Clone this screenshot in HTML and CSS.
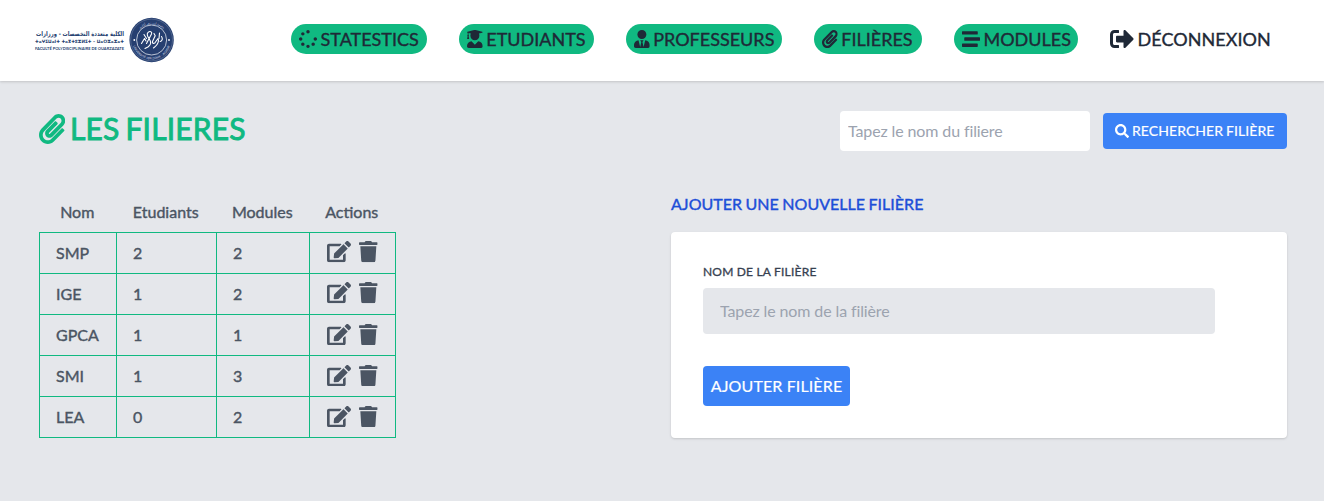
FILE: index.html
```html
<!DOCTYPE html>
<html lang="fr">
<head>
<meta charset="utf-8">
<title>Les filières</title>
<link rel="stylesheet" href="styles.css">
</head>
<body>
<svg class="sprite" aria-hidden="true">
  <symbol id="spinner" viewBox="0 0 512 512"><path d="M304 48c0 26.51-21.49 48-48 48s-48-21.49-48-48 21.49-48 48-48 48 21.49 48 48zm-48 368c-26.51 0-48 21.49-48 48s21.49 48 48 48 48-21.49 48-48-21.49-48-48-48zm208-208c-26.51 0-48 21.49-48 48s21.49 48 48 48 48-21.49 48-48-21.49-48-48-48zM96 256c0-26.51-21.49-48-48-48S0 229.49 0 256s21.49 48 48 48 48-21.49 48-48zm12.922 99.078c-26.51 0-48 21.49-48 48s21.49 48 48 48 48-21.49 48-48c0-26.509-21.491-48-48-48zm294.156 0c-26.51 0-48 21.49-48 48s21.49 48 48 48 48-21.49 48-48c0-26.509-21.49-48-48-48zM108.922 60.922c-26.51 0-48 21.49-48 48s21.49 48 48 48 48-21.49 48-48-21.491-48-48-48z"/></symbol>
  <symbol id="graduate" viewBox="0 0 448 512"><path d="M319.4 320.6L224 416l-95.4-95.4C57.1 323.7 0 382.2 0 454.4v9.6c0 26.5 21.5 48 48 48h352c26.5 0 48-21.5 48-48v-9.6c0-72.2-57.1-130.7-128.6-133.8zM13.6 79.8l6.4 1.5v58.4c-7 4.2-12 11.5-12 20.3 0 8.4 4.6 15.4 11.1 19.7L3.5 242c-1.7 6.9 2.1 14 7.6 14h41.8c5.5 0 9.3-7.1 7.6-14l-15.6-62.3C51.4 175.4 56 168.4 56 160c0-8.8-5-16.1-12-20.3V87.1l66 15.9c-8.6 17.2-14 36.4-14 57 0 70.7 57.3 128 128 128s128-57.3 128-128c0-20.6-5.3-39.8-14-57l96.3-23.2c18.2-4.4 18.2-27.1 0-31.5l-190.4-46c-13-3.1-26.7-3.1-39.7 0L13.6 48.2c-18.1 4.4-18.1 27.2 0 31.6z"/></symbol>
  <symbol id="tie" viewBox="0 0 448 512"><path d="M224 256c70.7 0 128-57.3 128-128S294.7 0 224 0 96 57.3 96 128s57.3 128 128 128zm95.8 32.6L272 480l-32-136 32-56h-96l32 56-32 136-47.8-191.4C56.9 292 0 350.3 0 422.4V464c0 26.5 21.5 48 48 48h352c26.5 0 48-21.5 48-48v-41.6c0-72.1-56.9-130.4-128.2-133.8z"/></symbol>
  <symbol id="clip" viewBox="0 0 448 512"><path d="M43.246 466.142c-58.43-60.289-57.341-157.511 1.386-217.581L254.392 34c44.316-45.332 116.351-45.336 160.671 0 43.89 44.894 43.943 117.329 0 162.276L232.214 383.128c-29.855 30.537-78.633 30.111-107.982-.998-28.275-29.97-27.368-77.473 1.452-106.953l143.743-146.835c6.182-6.314 16.312-6.422 22.626-.241l22.861 22.379c6.315 6.182 6.422 16.312.241 22.626L171.427 319.927c-4.932 5.045-5.236 13.428-.648 18.292 4.372 4.634 11.245 4.711 15.688.165l182.849-186.851c19.613-20.062 19.613-52.725-.011-72.798-19.189-19.627-49.957-19.637-69.154 0L90.39 293.295c-34.763 35.56-35.299 93.12-1.191 128.313 34.01 35.093 88.985 35.137 123.058.286l172.06-175.999c6.177-6.319 16.307-6.433 22.626-.256l22.877 22.364c6.319 6.177 6.434 16.307.256 22.626l-172.06 175.998c-59.576 60.938-155.943 60.216-214.77-.485z"/></symbol>
  <symbol id="stream" viewBox="0 0 512 512"><path d="M16 128h416c8.84 0 16-7.16 16-16V48c0-8.84-7.16-16-16-16H16C7.16 32 0 39.16 0 48v64c0 8.84 7.16 16 16 16zm480 80H80c-8.84 0-16 7.16-16 16v64c0 8.84 7.16 16 16 16h416c8.84 0 16-7.16 16-16v-64c0-8.84-7.16-16-16-16zm-64 176H16c-8.84 0-16 7.16-16 16v64c0 8.84 7.16 16 16 16h416c8.84 0 16-7.16 16-16v-64c0-8.84-7.16-16-16-16z"/></symbol>
  <symbol id="signout" viewBox="0 0 512 512"><path d="M497 273L329 441c-15 15-41 4.5-41-17v-96H152c-13.3 0-24-10.7-24-24v-96c0-13.3 10.7-24 24-24h136V88c0-21.4 25.9-32 41-17l168 168c9.3 9.4 9.3 24.6 0 34zM192 436v-40c0-6.6-5.4-12-12-12H96c-17.7 0-32-14.3-32-32V160c0-17.7 14.3-32 32-32h84c6.6 0 12-5.4 12-12V76c0-6.6-5.4-12-12-12H96c-53 0-96 43-96 96v192c0 53 43 96 96 96h84c6.6 0 12-5.4 12-12z"/></symbol>
  <symbol id="search" viewBox="0 0 512 512"><path d="M505 442.7L405.3 343c-4.5-4.5-10.6-7-17-7H372c27.6-35.3 44-79.7 44-128C416 93.1 322.9 0 208 0S0 93.1 0 208s93.1 208 208 208c48.3 0 92.7-16.4 128-44v16.3c0 6.4 2.5 12.5 7 17l99.7 99.7c9.4 9.4 24.6 9.4 33.9 0l28.3-28.3c9.4-9.4 9.4-24.6.1-34zM208 336c-70.7 0-128-57.2-128-128 0-70.7 57.2-128 128-128 70.7 0 128 57.2 128 128 0 70.7-57.2 128-128 128z"/></symbol>
  <symbol id="edit" viewBox="0 0 576 512"><path d="M402.6 83.2l90.2 90.2c3.8 3.8 3.8 10 0 13.8L274.4 405.6l-92.8 10.3c-12.4 1.4-22.9-9.1-21.5-21.5l10.3-92.8L388.8 83.2c3.8-3.8 10-3.8 13.8 0zm162-22.9l-48.8-48.8c-15.2-15.2-39.9-15.2-55.2 0l-35.4 35.4c-3.8 3.8-3.8 10 0 13.8l90.2 90.2c3.8 3.8 10 3.8 13.8 0l35.4-35.4c15.2-15.3 15.2-40 0-55.2zM384 346.2V448H64V128h229.8c3.2 0 6.2-1.3 8.5-3.5l40-40c7.6-7.6 2.2-20.5-8.5-20.5H48C21.5 64 0 85.5 0 112v352c0 26.5 21.5 48 48 48h352c26.5 0 48-21.5 48-48V306.2c0-10.7-12.9-16-20.5-8.5l-40 40c-2.2 2.3-3.5 5.3-3.5 8.5z"/></symbol>
  <symbol id="trash" viewBox="0 0 448 512"><path d="M432 32H312l-9.4-18.7A24 24 0 0 0 281.1 0H166.8a23.72 23.72 0 0 0-21.4 13.3L136 32H16A16 16 0 0 0 0 48v32a16 16 0 0 0 16 16h416a16 16 0 0 0 16-16V48a16 16 0 0 0-16-16zM53.2 467a48 48 0 0 0 47.9 45h245.8a48 48 0 0 0 47.9-45L416 128H32z"/></symbol>
</svg>

<header class="topbar">
  <svg class="logo" viewBox="0 0 142 48" width="142" height="48">
    <g class="logo-text">
      <text class="ar" x="91" y="19.5" textLength="88" lengthAdjust="spacingAndGlyphs" direction="rtl">الكلية متعددة التخصصات - ورزازات</text>
      <text class="tif" x="2" y="27" textLength="89" lengthAdjust="spacingAndGlyphs">ⵜⴰⵖⵉⵡⴰⵏⵜ ⵜⴰⴳⵜⵓⵣⵍⵉⵜ – ⵡⴰⵔⵣⴰⵣⴰⵜ</text>
      <text class="fr" x="2" y="34" textLength="89" lengthAdjust="spacingAndGlyphs">FACULTÉ POLYDISCIPLINAIRE DE OUARZAZATE</text>
    </g>
    <circle cx="118.6" cy="24" r="22.2" fill="#263f70"/>
    <circle cx="118.6" cy="24" r="20.900" fill="none" stroke="#8b9ab7" stroke-width=".4"/>
    <circle cx="118.6" cy="24" r="15" fill="none" stroke="#dfe4ee" stroke-width=".8"/>
    <path id="arcTop" d="M102.4 22a16.4 16.4 0 0 1 32.4 0" fill="none"/>
    <path id="arcBottom" d="M99.6 28a19.400 19.400 0 0 0 38 0" fill="none"/>
    <text class="seal"><textPath href="#arcTop" startOffset="50%" text-anchor="middle">جامعة ابن زهر أكادير</textPath></text>
    <text class="seal"><textPath href="#arcBottom" startOffset="50%" text-anchor="middle">UNIVERSITÉ IBN ZOHR - AGADIR</textPath></text>
    <g fill="none" stroke="#fff" stroke-width="1.1" stroke-linecap="round" stroke-linejoin="round">
      <path d="M108.500 27.500l3-5 1.500 2.500M113.500 27.500l5-9.500c1-2.300-1.600-3.300-3.400-1.700-1.900 1.800-.6 4.200 1.200 6.700 1.800 2.600 2 5.600-1 7.800l-3.300 1.700"/>
      <path d="M111 18.500l2.500 4M121 17.500l1.200 2.200-2.700 5.800c-.5 1.700.8 2.300 2.300 1.500l3.200-4.500.5 2.200c-.3 3-2 5-5 7.300"/>
      <path d="M126.500 17l-.5 5.500M128.500 20.500c1.500 2 .8 4.500-1.300 5"/>
    </g>
    <circle cx="101.300" cy="24" r=".9" fill="#fff"/><circle cx="136" cy="24" r=".9" fill="#fff"/>
  </svg>
  <nav class="menu">
    <a class="item w136"><svg class="sq"><use href="#spinner"/></svg><span>STATESTICS</span></a>
    <a class="item w135"><svg class="nar"><use href="#graduate"/></svg><span>ETUDIANTS</span></a>
    <a class="item w156"><svg class="nar"><use href="#tie"/></svg><span>PROFESSEURS</span></a>
    <a class="item w108"><svg class="nar"><use href="#clip"/></svg><span>FILIÈRES</span></a>
    <a class="item w124"><svg class="sq"><use href="#stream"/></svg><span>MODULES</span></a>
    <a class="item logout"><svg class="big"><use href="#signout"/></svg><span>DÉCONNEXION</span></a>
  </nav>
</header>

<main class="page">
  <div class="heading">
    <h1><svg><use href="#clip"/></svg><span>LES FILIERES</span></h1>
    <form class="search">
      <input type="text" placeholder="Tapez le nom du filiere">
      <button type="button"><svg><use href="#search"/></svg><span>RECHERCHER FILIÈRE</span></button>
    </form>
  </div>
  <div class="columns">
    <table class="list">
      <colgroup><col class="c1"><col class="c2"><col class="c3"><col class="c4"></colgroup>
      <thead><tr><th>Nom</th><th>Etudiants</th><th>Modules</th><th>Actions</th></tr></thead>
      <tbody>
        <tr><td>SMP</td><td>2</td><td>2</td><td><div class="actions"><svg class="edit"><use href="#edit"/></svg><svg class="trash"><use href="#trash"/></svg></div></td></tr>
        <tr><td>IGE</td><td>1</td><td>2</td><td><div class="actions"><svg class="edit"><use href="#edit"/></svg><svg class="trash"><use href="#trash"/></svg></div></td></tr>
        <tr><td>GPCA</td><td>1</td><td>1</td><td><div class="actions"><svg class="edit"><use href="#edit"/></svg><svg class="trash"><use href="#trash"/></svg></div></td></tr>
        <tr><td>SMI</td><td>1</td><td>3</td><td><div class="actions"><svg class="edit"><use href="#edit"/></svg><svg class="trash"><use href="#trash"/></svg></div></td></tr>
        <tr><td>LEA</td><td>0</td><td>2</td><td><div class="actions"><svg class="edit"><use href="#edit"/></svg><svg class="trash"><use href="#trash"/></svg></div></td></tr>
      </tbody>
    </table>
    <section class="add">
      <h2>AJOUTER UNE NOUVELLE FILIÈRE</h2>
      <form class="card">
        <label for="nom">NOM DE LA FILIÈRE</label>
        <input id="nom" type="text" placeholder="Tapez le nom de la filière">
        <button type="button">AJOUTER FILIÈRE</button>
      </form>
    </section>
  </div>
</main>
</body>
</html>
```
FILE: styles.css
```css
* { box-sizing: border-box; }
body {
  margin: 0;
  min-height: 501px;
  background: #e5e7eb;
  font-family: Lato, "Noto Sans", sans-serif;
  font-size: 16px;
  line-height: 24px;
  color: #4b5563;
}
h1, h2 { margin: 0; font-weight: 400; }
svg { display: block; flex: none; fill: currentColor; }
input, button { font: inherit; border: 0; outline: 0; border-radius: 4px; }
input::placeholder { color: #9ca3af; opacity: 1; }
.sprite { position: absolute; width: 0; height: 0; }

.topbar {
  display: flex;
  align-items: center;
  justify-content: space-between;
  height: 81px;
  padding: 0 53px 3px 33px;
  background: #fff;
  box-shadow: 0 1px 3px rgba(0, 0, 0, .1), 0 1px 2px rgba(0, 0, 0, .06);
}
.logo { margin-top: 2px; overflow: visible; }
.logo-text { fill: #263f70; }
.ar { font: 700 6.5px "DejaVu Sans", sans-serif; }
.tif { font: 700 4.5px "DejaVu Sans", sans-serif; }
.fr { font: 700 4px Lato, sans-serif; }
.seal { font: 3px "DejaVu Sans", sans-serif; fill: #d3d9e6; }

.menu { display: flex; gap: 32px; }
.item {
  display: flex;
  align-items: center;
  gap: 3.5px;
  height: 30px;
  padding: 0 8px;
  border-radius: 15px;
  background: #10b981;
  color: #1f2937;
  font-size: 18px;
  white-space: nowrap;
  -webkit-text-stroke: .35px #1f2937;
}
.sq { width: 18px; height: 18px; }
.nar { width: 15.75px; height: 18px; }
.big { width: 24px; height: 24px; }
.w136 { width: 136px; }
.w135 { width: 135px; }
.w156 { width: 156px; }
.w108 { width: 108px; }
.w124 { width: 124px; }
.logout { width: 161px; padding: 0; background: none; letter-spacing: .05px; }

.page { padding: 30px 37px 0 39px; }
.heading { display: flex; justify-content: space-between; height: 40px; }
h1 {
  display: flex;
  align-items: center;
  gap: 4.75px;
  height: 36px;
  font-size: 30px;
  line-height: 36px;
  letter-spacing: .15px;
  word-spacing: -1.8px;
  color: #10b981;
  -webkit-text-stroke: .9px #10b981;
}
h1 svg { width: 26.25px; height: 30px; }
h1 span { padding-bottom: 2px; }
.search { display: flex; align-items: center; gap: 13px; }
.search input { width: 250px; height: 40px; padding: 0 8px 2px; background: #fff; letter-spacing: -.12px; }
.search button {
  display: flex;
  align-items: center;
  gap: 3px;
  width: 184px;
  height: 36px;
  padding: 0 12px;
  background: #3b82f6;
  color: #fff;
  font-size: 14px;
  letter-spacing: .08px;
  word-spacing: -.8px;
  white-space: nowrap;
  -webkit-text-stroke: .2px #fff;
}
.search button svg { width: 14px; height: 14px; }

.columns { display: flex; justify-content: space-between; padding-top: 41px; }
.list {
  width: 357px;
  height: 246px;
  border-collapse: collapse;
  table-layout: fixed;
  -webkit-text-stroke: .4px #4b5563;
}
.c1 { width: 77px; }
.c2 { width: 100px; }
.c3 { width: 93px; }
.c4 { width: 86px; }
th { height: 40px; padding: 0 1.5px 0 0; font-weight: 400; text-align: center; }
td { height: 41px; padding: 0 16px; border: 1px solid #10b981; }
.actions { display: flex; gap: 8px; margin: 0 -6px 0 1px; padding-bottom: 1px; }
.edit { width: 24px; height: 21.33px; }
.trash { width: 18.67px; height: 21.33px; }

.add { width: 616px; }
h2 {
  height: 40px;
  font-size: 16px;
  line-height: 24px;
  letter-spacing: .02px;
  word-spacing: -.6px;
  color: #1d4ed8;
  -webkit-text-stroke: .4px #1d4ed8;
}
.card {
  display: flex;
  flex-direction: column;
  align-items: flex-start;
  height: 206px;
  padding: 32px;
  border-radius: 4px;
  background: #fff;
  box-shadow: 0 1px 3px rgba(0, 0, 0, .1), 0 1px 2px rgba(0, 0, 0, .06);
}
.card label {
  font-size: 12px;
  line-height: 16px;
  letter-spacing: .2px;
  color: #374151;
  -webkit-text-stroke: .3px #374151;
}
.card input { width: 512px; height: 46px; margin: 8px 0 32px; padding: 0 17px 2px; background: #e5e7eb; letter-spacing: -.12px; }
.card button {
  width: 147px;
  height: 40px;
  padding: 0;
  background: #3b82f6;
  color: #fff;
  letter-spacing: .12px;
  white-space: nowrap;
  -webkit-text-stroke: .2px #fff;
}
```
